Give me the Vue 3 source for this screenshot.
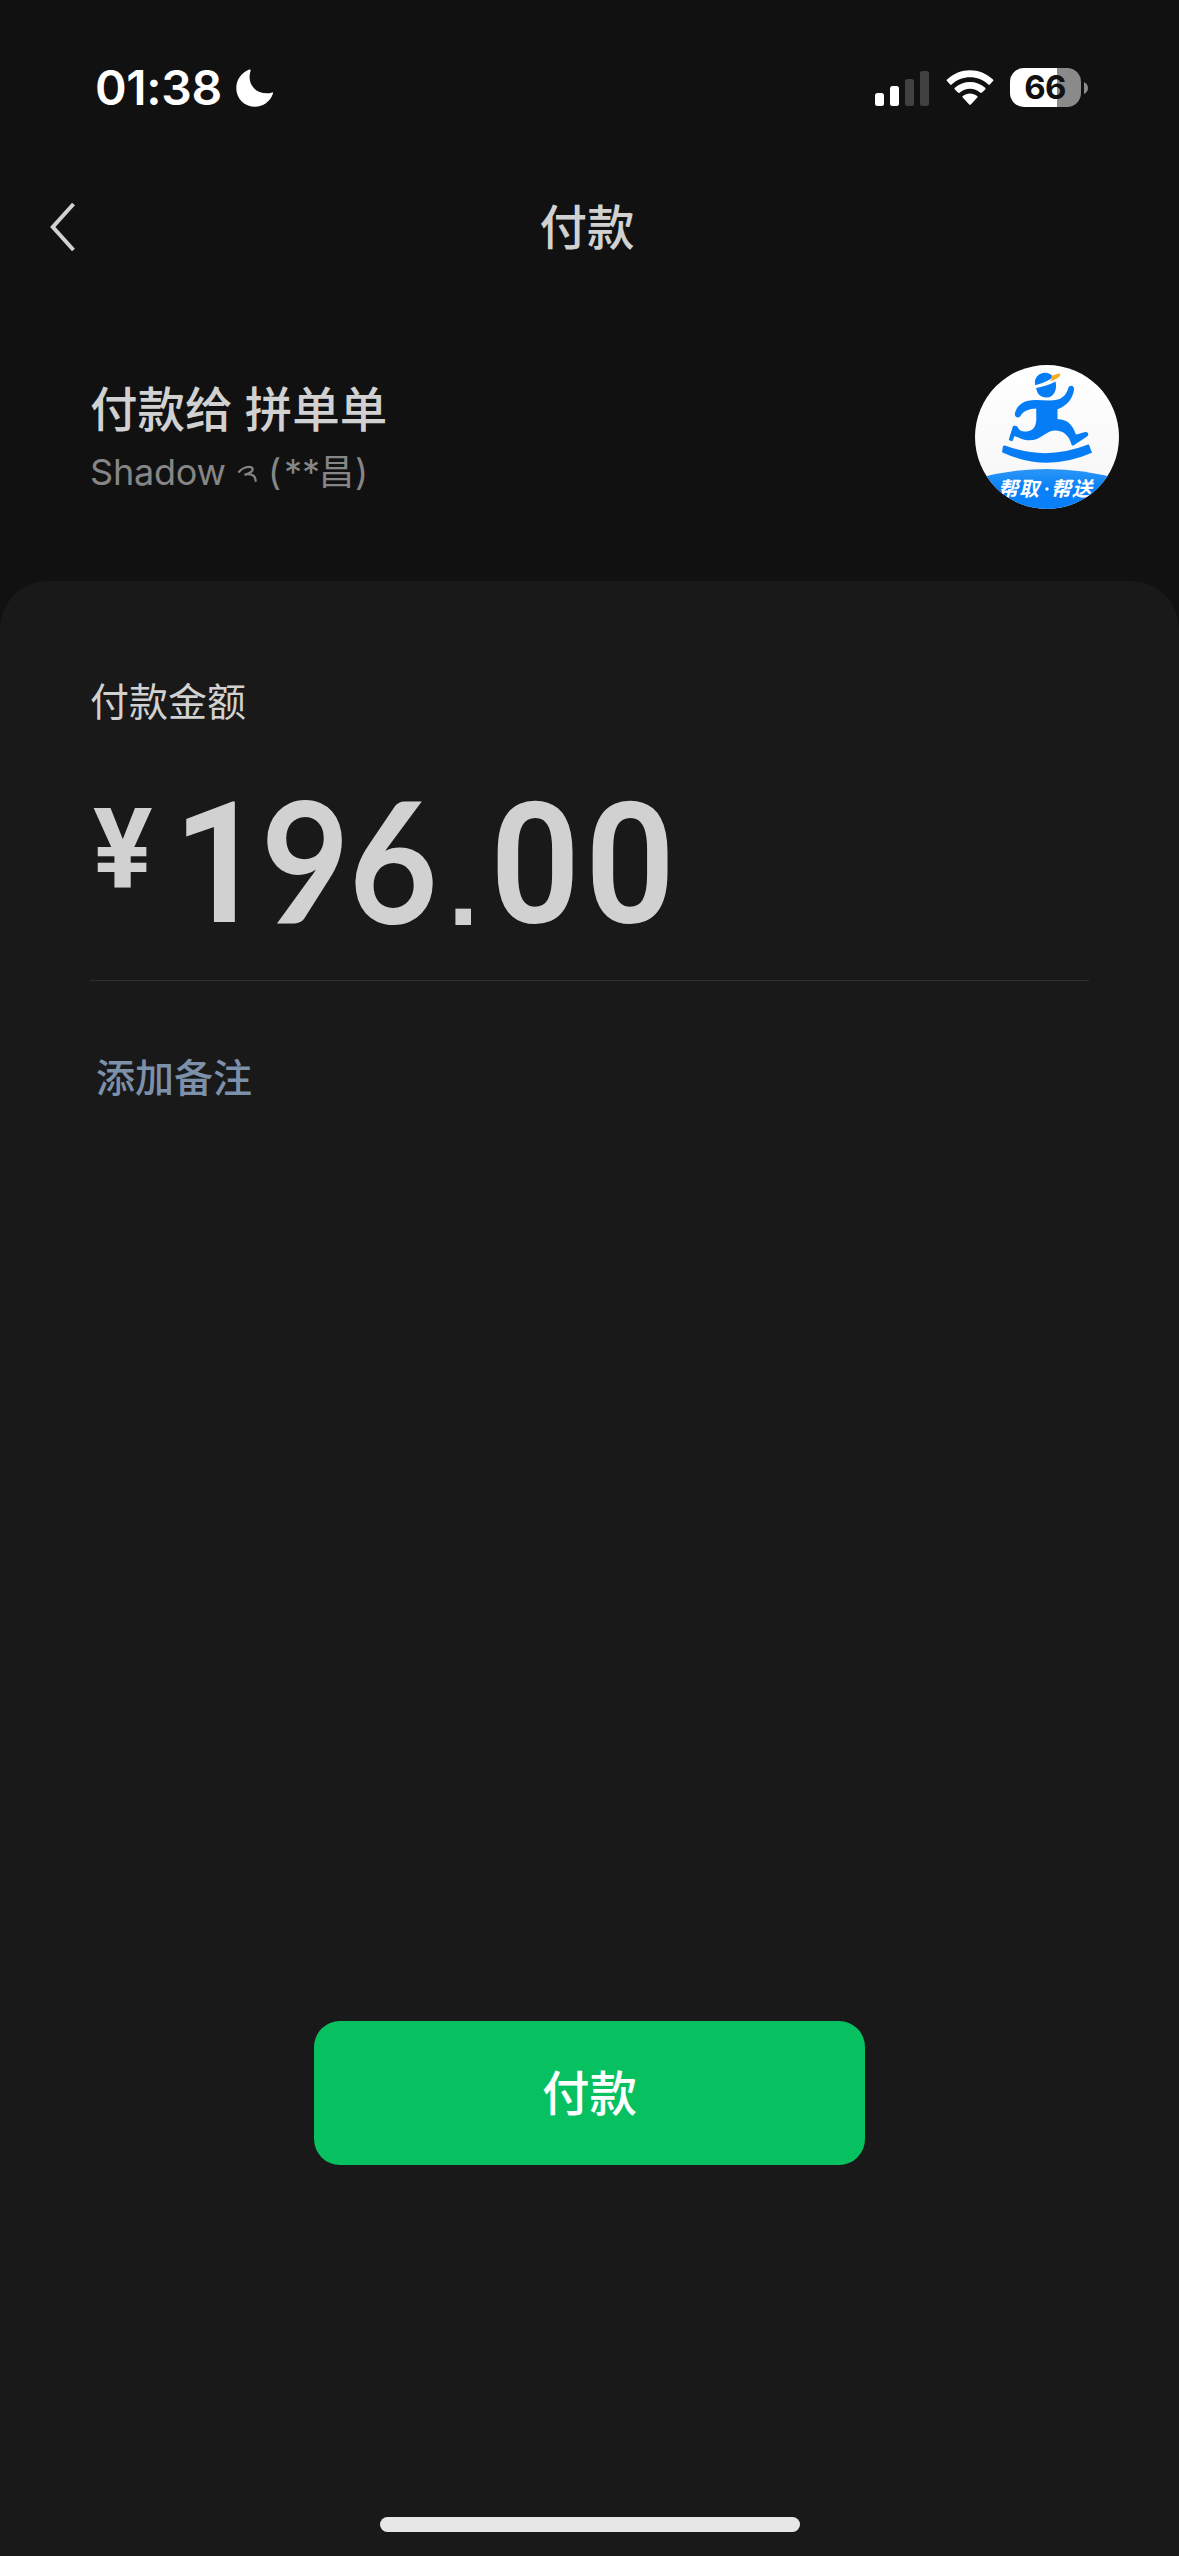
<template>
  <div class="pay-page">
    <!-- Status bar -->
    <div class="status-bar">
      <div class="status-left">
        <span class="clock">01:38</span>
        <svg class="moon" viewBox="0 0 37 38">
          <path d="M13.4 0.6 C14.3 0.2 15 0.7 14.5 1.9 C10.8 13.5 18.5 25.2 32.5 24.3 C34 24.2 35 23.7 36 23.4 C37 23.2 37.2 24 36.8 25 C34.2 32.6 27 37.7 19 37.7 C8.5 37.7 0.3 29.6 0.3 19.2 C0.3 10.8 5.5 3.6 13.4 0.6 Z" />
        </svg>
      </div>
      <div class="status-right">
        <div class="signal">
          <span v-for="bar in bars" :key="bar.h" :class="['bar', { off: !bar.on }]" :style="{ height: bar.h + 'px' }"></span>
        </div>
        <svg class="wifi" viewBox="0 0 48 36">
          <path d="M1 9.5 C14 -3 34 -3 47 9.5 Q47.8 10.3 47 11.1 L43.9 14.4 Q43.1 15.2 42.3 14.4 C32 4.9 16 4.9 5.7 14.4 Q4.9 15.2 4.1 14.4 L1 11.1 Q0.2 10.3 1 9.5 Z" />
          <path d="M8.8 17.8 C17.5 9.9 30.5 9.9 39.2 17.8 Q40 18.6 39.2 19.4 L36 22.6 Q35.2 23.4 34.4 22.7 C28.4 17.5 19.6 17.5 13.6 22.7 Q12.8 23.4 12 22.6 L8.8 19.4 Q8 18.6 8.8 17.8 Z" />
          <path d="M16.8 26 C21 22.6 27 22.6 31.2 26 Q32.1 26.8 31.3 27.6 L24.8 34.4 Q24 35.2 23.2 34.4 L16.7 27.6 Q15.9 26.8 16.8 26 Z" />
        </svg>
        <div class="battery">
          <div class="battery-body">66</div>
          <svg class="battery-nub" viewBox="0 0 4 12"><path d="M0 0 Q4 2 4 6 Q4 10 0 12 Z" /></svg>
        </div>
      </div>
    </div>

    <!-- Navigation -->
    <header class="nav-bar">
      <svg class="back" viewBox="0 0 26 50" @click="goBack">
        <path d="M23.5 2 L2.8 25 L23.5 48" />
      </svg>
      <h1 class="nav-title">付款</h1>
    </header>

    <!-- Payee -->
    <section class="payee">
      <div class="payee-text">
        <h2 class="payee-name">付款给 拼单单</h2>
        <p class="payee-sub">
          <span class="nick">Shadow</span>
          <svg class="swirl" viewBox="0 0 20 18">
            <path d="M1 6.8 C4.5 2.4 12 0.4 14.3 3 C15.8 5.6 12.5 8.6 6.5 9.8 C12 8 18 10.4 17.6 15.8" />
          </svg>
          <span class="paren">(</span><span class="stars">**</span><span class="real">昌</span><span class="paren last">)</span>
        </p>
      </div>
      <svg class="avatar" viewBox="0 0 144 144">
        <defs>
          <clipPath id="round"><circle cx="72" cy="72" r="72" /></clipPath>
          <linearGradient id="paper" x1="0" y1="0" x2="0" y2="1">
            <stop offset="0" stop-color="#ffffff" />
            <stop offset="0.75" stop-color="#f8f8f9" />
          </linearGradient>
          <linearGradient id="wave" x1="0" y1="0" x2="0" y2="1">
            <stop offset="0" stop-color="#2a96f6" />
            <stop offset="0.5" stop-color="#0a80f8" />
          </linearGradient>
        </defs>
        <g clip-path="url(#round)">
          <rect width="144" height="144" fill="url(#paper)" />
          <path d="M0 114 Q72 94 144 114 V144 H0 Z" fill="url(#wave)" />
          <g fill="#067cf5">
            <path d="M60.2 20.2 C58.5 12.5 64 7.8 70 7.7 C73.5 7.7 76 9.2 77.3 11 C78.5 12.4 75 16 60.2 20.2 Z" />
            <path d="M61.2 23 C69 21.6 75.5 19.3 80.5 16.5 C82.5 24.5 79 32.5 71.5 32.5 C65 32.5 61.6 28 61.2 23 Z" />
            <path d="M52 36 C62 33.5 73 37 83 34.5 C89 32.5 92 28 93.3 23 C94.5 19.5 99.5 20.3 99 24.5 C98 34 91 41.5 82.5 44.3 V54.3 C91 54 97 58.5 101 69.5 C104 69.4 107.5 67.3 110.5 67 C113.5 66.8 114.2 70.2 112 71.6 L98.8 80.2 C97.6 80.9 96.8 80.6 96.4 79.3 C94 70.5 88.5 65.2 79.5 65.4 C70 65.6 66.5 76 52.5 75.3 C47 75.2 42.5 72 39.5 71 L37.8 75.4 Q36 77 33.8 74.5 L38 61 Q40.5 60 42.8 62 C43.5 65.5 48 67 52 66.5 C60.5 65.5 61.5 58 61.3 52 L61.2 43.5 C54 43.7 48 46 45.5 51 C43.5 53.8 39.2 52.3 39.9 48.5 C41.5 41.5 46.5 37.5 52 36 Z" />
            <path d="M28 81 Q29.5 80 31.5 80.9 Q71 96 112.4 79.8 Q113.9 79 114.3 80.4 L117 87.8 Q71 107.8 27 87.2 Z" />
          </g>
          <path d="M76.3 10.9 L83.5 8.6 C86.5 8.3 85.2 12 81.8 13.6 Q78 15.6 75.2 16.2 Q77.5 13.5 76.3 10.9 Z" fill="#f7ac1c" />
          <text x="23" y="131.3" class="avatar-text">帮取</text>
          <circle cx="72" cy="124" r="1.7" fill="#fff" />
          <text x="76" y="131.3" class="avatar-text">帮送</text>
        </g>
      </svg>
    </section>

    <!-- Amount card -->
    <main class="card">
      <p class="amount-label">付款金额</p>
      <div class="amount">
        <span class="yen">¥</span>
        <span v-for="(d, i) in digits" :key="i" :class="['digit', d.cls]"><i>{{ d.ch }}</i></span>
      </div>
      <a class="remark">添加备注</a>
      <button class="pay-btn" @click="pay">付款</button>
      <div class="home-indicator"></div>
    </main>
  </div>
</template>

<script setup>
import { ref } from 'vue';

const bars = [
  { h: 13, on: true },
  { h: 20, on: true },
  { h: 27, on: false },
  { h: 35, on: false }
];

const amount = ref('196.00');
const classOf = { 1: 'one', 9: 'nine', 6: 'six', 0: 'zero', '.': 'dot' };
const digits = amount.value.split('').map(ch => ({ ch, cls: classOf[ch] }));

const paid = ref(false);
const pay = () => {
  paid.value = true;
};
const goBack = () => window.history.back();
</script>

<style>
body {
  background: #111111;
}
</style>

<style scoped>
.pay-page {
  width: 1179px;
  height: 2556px;
  display: flex;
  flex-direction: column;
  background: #111111;
  color: #d1d1d1;
  font-family: Inter, 'Noto Sans CJK SC', sans-serif;
  overflow: hidden;
}

h1, h2, p {
  margin: 0;
  font-weight: 400;
}

.status-bar {
  height: 176px;
  box-sizing: border-box;
  padding: 0 91px 0 95px;
  display: flex;
  justify-content: space-between;
  align-items: center;
  color: #fff;
}

.status-left, .status-right {
  display: flex;
  align-items: center;
}

.clock {
  width: 141px;
  padding-bottom: 2px;
  font-size: 48px;
  font-weight: 600;
  letter-spacing: -0.3px;
  white-space: nowrap;
}

.moon {
  width: 37px;
  height: 38px;
  fill: #fff;
}

.signal {
  height: 35px;
  display: flex;
  align-items: flex-end;
  gap: 6px;
}

.bar {
  width: 9px;
  border-radius: 2.5px;
  background: #fff;
}

.bar.off { background: #414141; }

.wifi {
  width: 48px;
  height: 36px;
  margin: 0 16px 0 17px;
  fill: #fff;
}

.battery {
  display: flex;
  align-items: center;
  gap: 3px;
  padding-bottom: 1px;
}

.battery-body {
  width: 71px;
  height: 39px;
  border-radius: 14px;
  background: linear-gradient(90deg, #fff 66%, #8a8a8a 66%);
  color: #111111;
  font-size: 33px;
  font-weight: 700;
  line-height: 39px;
  text-align: center;
  text-indent: -1px;
  letter-spacing: -0.8px;
}

.battery-nub {
  width: 4px;
  height: 12px;
  fill: #8a8a8a;
}

.nav-bar {
  height: 102px;
  display: grid;
  grid-template-columns: 100px 1fr 105px;
  align-items: center;
}

.back {
  width: 26px;
  height: 50px;
  margin-left: 50px;
  fill: none;
  stroke: #d1d1d1;
  stroke-width: 4;
}

.nav-title {
  padding-top: 2px;
  text-align: center;
  font-size: 47.5px;
  font-weight: 500;
  line-height: 100px;
}

.payee {
  height: 303px;
  box-sizing: border-box;
  padding: 87px 60px 0 90px;
  display: flex;
  justify-content: space-between;
}

.payee-name {
  margin-top: 13px;
  font-size: 47.5px;
  font-weight: 500;
  line-height: 64px;
  word-spacing: -0.5px;
}

.payee-sub {
  display: flex;
  align-items: center;
  height: 59px;
  font-size: 36px;
  color: #868686;
}

.nick {
  width: 148px;
  letter-spacing: -0.2px;
}

.swirl {
  width: 20px;
  height: 18px;
  margin: 4px 10px 0 0;
  fill: none;
  stroke: #868686;
  stroke-width: 2.2;
  stroke-linecap: round;
}

.paren { width: 16px; }
.paren.last { margin-left: 1px; }
.stars { width: 35px; }

.real {
  padding-top: 2px;
  font-size: 35px;
  line-height: 57px;
}

.avatar {
  width: 144px;
  height: 144px;
}

.avatar-text {
  font-family: 'Noto Sans CJK SC', sans-serif;
  font-size: 20px;
  font-weight: 700;
  font-style: italic;
  letter-spacing: 1px;
  fill: #fff;
}

.card {
  flex: 1;
  box-sizing: border-box;
  padding: 91px 90px 24px;
  display: flex;
  flex-direction: column;
  background: #191919;
  border-radius: 48px 48px 0 0;
}

.amount-label {
  font-size: 39px;
  line-height: 60px;
}

.amount {
  height: 248px;
  display: flex;
  border-bottom: 1px solid #2f2f2f;
  color: #d1d1d1;
  line-height: 200px;
}

.yen {
  width: 80px;
  padding: 17px 0 0 3px;
  font-family: Roboto, sans-serif;
  font-size: 111px;
  font-weight: 700;
}

.digit i {
  display: inline-block;
  transform-origin: 0 50%;
  font-style: normal;
}

.digit {
  padding-top: 33px;
  font-family: Roboto, sans-serif;
  font-size: 168px;
  font-weight: 600;
}

.one { width: 88px; }
.one i { transform: scaleX(0.96); }

/* straight-stemmed 6 and 9 */
.nine, .six {
  width: 88px;
  padding-top: 27px;
  font-family: Lato, sans-serif;
  font-weight: 700;
}

.nine i, .six i { transform: scaleX(0.91); }

.dot {
  box-sizing: border-box;
  width: 53px;
  padding: 55px 0 0 11px;
  font-family: 'Liberation Sans', sans-serif;
  font-size: 110px;
  font-weight: 700;
}

.zero { width: 95px; }
.zero i { transform: scaleX(0.94); }

.remark {
  margin: 52px 0 0 6px;
  font-size: 39px;
  font-weight: 500;
  line-height: 90px;
  color: #7d90a9;
}

.pay-btn {
  width: 551px;
  height: 144px;
  margin: 898px auto 0;
  padding: 0 0 5px;
  border: none;
  border-radius: 26px;
  background: #07c160;
  color: #fff;
  font-family: inherit;
  font-size: 47.5px;
  font-weight: 500;
  cursor: pointer;
}

.home-indicator {
  width: 420px;
  height: 15px;
  margin: auto auto 0;
  border-radius: 8px;
  background: #e7e7e7;
}
</style>
